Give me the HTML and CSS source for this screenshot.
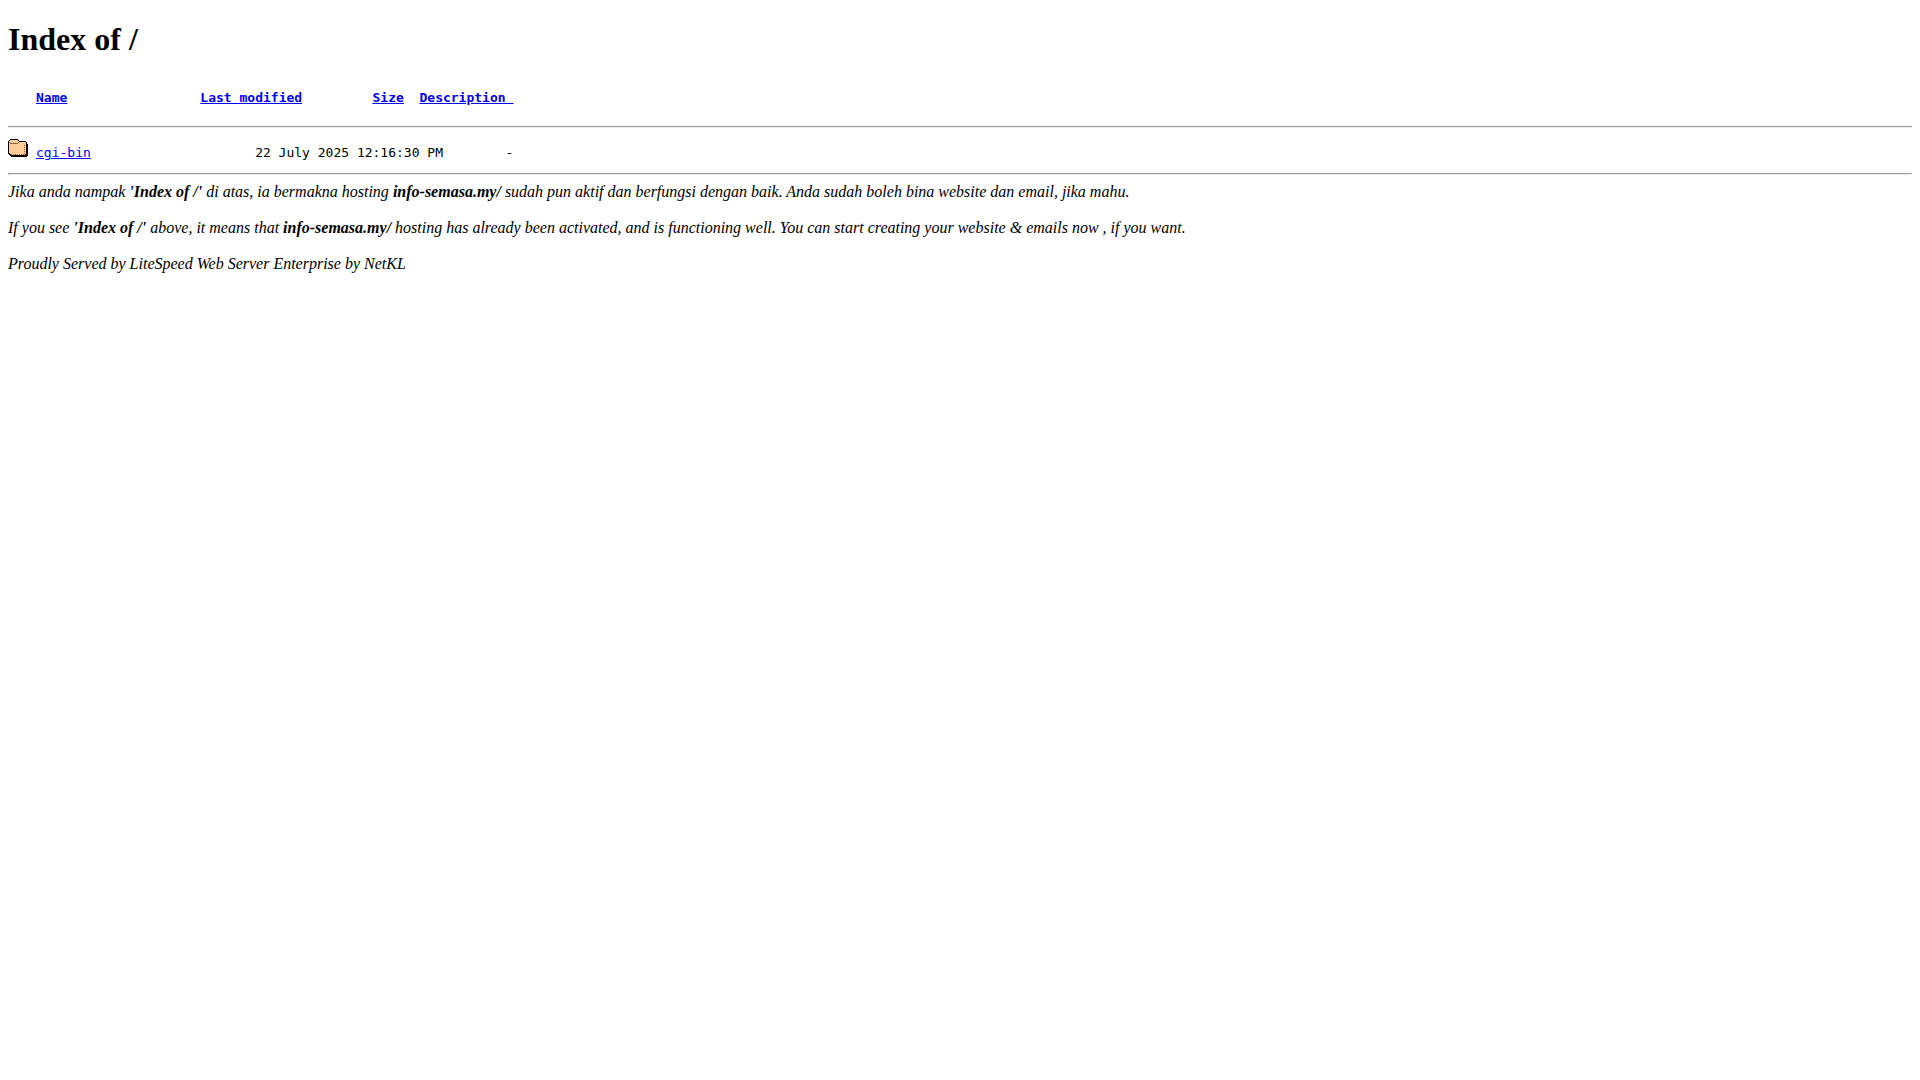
FILE: index.html
```html
<!DOCTYPE html>
<html lang="en">
<head>
    <meta charset="UTF-8">
    <meta name="viewport" content="width=device-width, initial-scale=1.0">
    <title>Index of /</title>
    <link rel="stylesheet" href="styles.css">
</head>
<body>
    <h1 class="title">Index of /</h1>
    <table class="listing">
        <colgroup>
            <col class="col-icon">
            <col class="col-name">
            <col class="col-modified">
            <col class="col-size">
            <col>
        </colgroup>
        <thead>
            <tr>
                <th></th>
                <th><a href="?ND">Name</a></th>
                <th><a href="?MA">Last modified</a></th>
                <th><a href="?SA">Size</a></th>
                <th><a href="?DA">Description </a></th>
            </tr>
        </thead>
        <tbody>
            <tr>
                <td class="icon">
                    <svg class="folder" width="20" height="22" viewBox="0 0 20 22" shape-rendering="crispEdges" role="img" aria-label="[DIR]">
                        <path d="M2 0h8v1h1v1h7v1h1v2h1v12h-1v1H3v-1H2v-1H1v-1H0V2h1V1h1z" fill="#000"/>
                        <path d="M2 1h8v1h1v1h7v12h-1v1H3v-1H2v-1H1V2h1z" fill="#fc9"/>
                        <path d="M2 4h8v1H2zM10 3h1v1h-1zM1 3h1v1H1z" fill="#963"/>
                        <path d="M3 15h1v1H3zM5 15h1v1H5zM7 15h1v1H7zM9 15h1v1H9zM11 15h1v1h-1zM13 15h1v1h-1zM15 15h1v1h-1zM16 14h1v1h-1zM16 12h1v1h-1zM16 10h1v1h-1zM16 8h1v1h-1zM16 6h1v1h-1z" fill="#963"/>
                        <path d="M17 16h1v1h-1zM18 15h1v1h-1z" fill="#630"/>
                    </svg>
                </td>
                <td><a href="cgi-bin/">cgi-bin</a></td>
                <td class="modified">22 July 2025 12:16:30 PM</td>
                <td class="size">-</td>
                <td></td>
            </tr>
        </tbody>
    </table>
    <hr class="rule">
    <address>
        Jika anda nampak <b>'Index of /'</b> di atas, ia bermakna hosting <b>info-semasa.my/</b> sudah pun aktif dan berfungsi dengan baik. Anda sudah boleh bina website dan email, jika mahu.<br><br>
        If you see <b>'Index of /'</b> above, it means that <b>info-semasa.my/</b> hosting has already been activated, and is functioning well. You can start creating your website &amp; emails now , if you want.<br><br>
        Proudly Served by LiteSpeed Web Server Enterprise by NetKL
    </address>
</body>
</html>
```
FILE: styles.css
```css
body {
    margin: 0;
    padding: 8px;
    background: #fff;
    color: #000;
    font-family: "Liberation Serif", "Times New Roman", serif;
    font-size: 16px;
    line-height: 18px;
}

.title {
    margin: 13px 0 32px;
    font-size: 32px;
    line-height: 37px;
}

/* file listing */
.listing {
    width: 100%;
    table-layout: fixed;
    border-collapse: separate;
    border-spacing: 0;
    font-family: "DejaVu Sans Mono", monospace;
    font-size: 13px;
    line-height: 15px;
}
.listing th,
.listing td {
    padding: 0;
    text-align: left;
    vertical-align: top;
}
.listing th a {
    white-space: pre;
}
.listing th {
    padding-bottom: 21px;
    border-bottom: 2px groove #eee;
}
.listing td {
    padding-top: 17px;
    white-space: nowrap;
}
.listing .icon {
    padding-top: 11px;
}
.listing .modified {
    padding-left: 7ch;
}
.listing .size {
    padding-left: 17ch;
}
.col-icon {
    width: 28px;
}
.col-name {
    width: 21ch;
}
.col-modified {
    width: 22ch;
}
.col-size {
    width: 6ch;
}

.folder {
    display: block;
}

.rule {
    margin: 12px 0 8px;
    border: 1px inset #eee;
}

a {
    color: #0000ee;
}
```
